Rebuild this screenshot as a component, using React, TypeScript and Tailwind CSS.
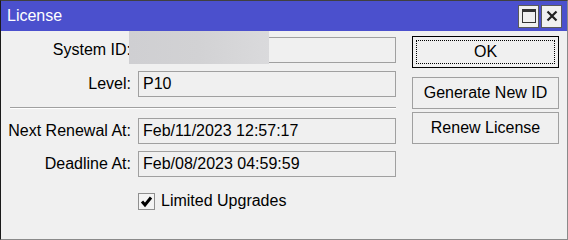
import React from "react";

function Field({ value }: { value: string }) {
  return (
    <div className="w-[258px] h-[26px] border border-[#a0a0a0] bg-[#f0f0f0] flex items-center pl-[4px] text-black">
      {value}
    </div>
  );
}

function Row({ label, value }: { label: string; value: string }) {
  return (
    <div className="flex items-center">
      <div className="w-[131px] text-right pr-[1px]">{label}</div>
      <div className="ml-[6px]">
        <Field value={value} />
      </div>
    </div>
  );
}

function Btn({ children, focused }: { children: React.ReactNode; focused?: boolean }) {
  return (
    <div
      className={
        "w-[147px] h-[32px] flex items-center justify-center bg-[#f0f0f0] border " +
        (focused ? "border-black" : "border-[#a0a0a0]")
      }
    >
      {focused ? (
        <div className="w-[139px] h-[24px] border border-dotted border-black flex items-center justify-center">
          {children}
        </div>
      ) : (
        children
      )}
    </div>
  );
}

export default function App() {
  return (
    <div
      className="w-[568px] h-[240px] bg-[#f0f0f0] border-l border-t border-l-[#1a1a1a] border-t-[#404040] border-r border-b border-r-[#8a8a8a] border-b-[#8a8a8a] flex flex-col text-[16px] text-black relative overflow-hidden"
      style={{ fontFamily: '"Liberation Sans", Arial, sans-serif' }}
    >
      <div className="h-[30px] bg-[#4b50cd] flex items-center pl-[6px] pr-[5px] shrink-0">
        <span className="text-white text-[16px] flex-1">License</span>
        <div className="flex gap-[2px]">
          <div className="w-[21px] h-[23px] bg-[#f0f0f0] border border-[#5a5a5a] flex items-center justify-center">
            <div className="w-[14px] h-[14px] border border-[#333] border-t-[3px]" />
          </div>
          <div className="w-[21px] h-[23px] bg-[#f0f0f0] border border-[#5a5a5a] flex items-center justify-center">
            <svg width="12" height="12" viewBox="0 0 12 12">
              <path d="M1.5 1.5 L10.5 10.5 M10.5 1.5 L1.5 10.5" stroke="#222" strokeWidth="2.2" />
            </svg>
          </div>
        </div>
      </div>
      <div className="flex flex-1">
        <div className="flex flex-col pt-[6px] w-[404px]">
          <div className="flex flex-col gap-[8px]">
            <Row label="System ID:" value="" />
            <Row label="Level:" value="P10" />
          </div>
          <div className="ml-[9px] w-[386px] mt-[10px] border-t border-[#a0a0a0] border-b border-b-white" />
          <div className="flex flex-col gap-[7px] mt-[9px]">
            <Row label="Next Renewal At:" value="Feb/11/2023 12:57:17" />
            <Row label="Deadline At:" value="Feb/08/2023 04:59:59" />
          </div>
          <div className="flex items-center ml-[137px] mt-[12px]">
            <div className="w-[17px] h-[17px] border border-[#8f8f8f] bg-[#f4f4f4] flex items-center justify-center">
              <svg width="13" height="13" viewBox="0 0 13 13">
                <path d="M2 6.5 L5 10 L11 2.5" stroke="#000" strokeWidth="3" fill="none" />
              </svg>
            </div>
            <span className="ml-[6px]">Limited Upgrades</span>
          </div>
        </div>
        <div className="flex flex-col pt-[5px] ml-[7px]">
          <Btn focused>OK</Btn>
          <div className="mt-[9px]">
            <Btn>Generate New ID</Btn>
          </div>
          <div className="mt-[3px]">
            <Btn>Renew License</Btn>
          </div>
        </div>
      </div>
      <div className="absolute left-[128px] top-[30px] w-[140px] h-[33px] bg-gradient-to-r from-[#cfcfd2] via-[#d2d2d4] to-[#dadadc]" />
    </div>
  );
}
